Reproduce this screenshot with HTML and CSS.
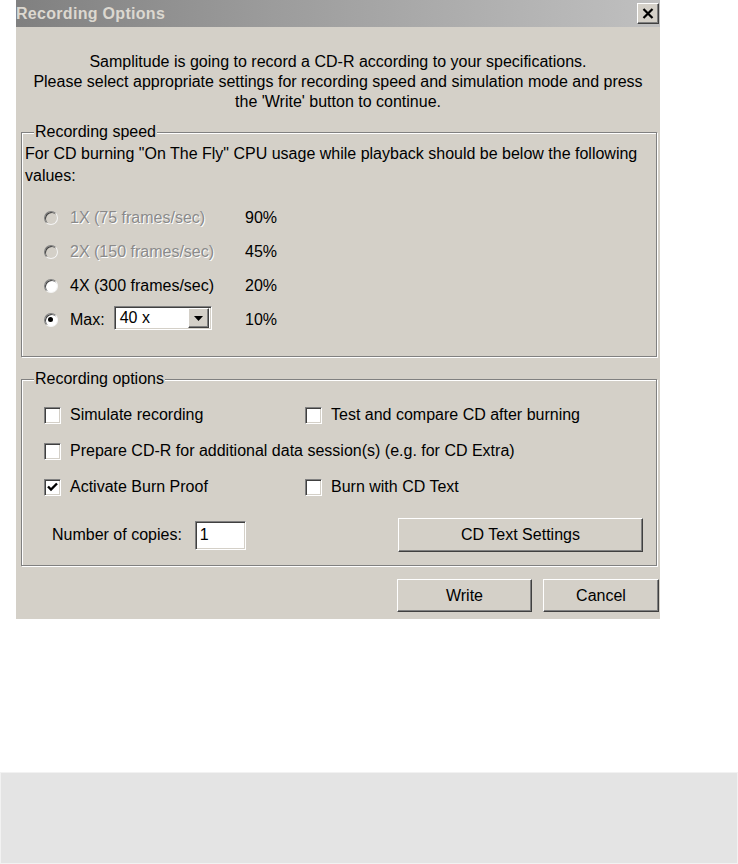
FILE: index.html
```html
<!doctype html>
<html lang="en">
<head>
    <meta charset="UTF-8" />
    <meta name="viewport" content="width=device-width, initial-scale=1.0" />
    <title>Recording Options</title>
    <link rel="stylesheet" href="styles.css">
</head>
<body>
    <div class="dialog">
        <div class="titlebar">
            <span class="title">Recording Options</span>
            <span class="close">
                <svg width="12" height="11" viewBox="0 0 12 11">
                    <path d="M1.5 1 L10.5 10 M10.5 1 L1.5 10" stroke="#000" stroke-width="2.2" fill="none"/>
                </svg>
            </span>
        </div>

        <div class="intro">
            Samplitude is going to record a CD-R according to your specifications.<br>
            Please select appropriate settings for recording speed and simulation mode and press<br>
            the 'Write' button to continue.
        </div>

        <fieldset class="group speed">
            <legend>Recording speed</legend>
            <p class="note">For CD burning "On The Fly" CPU usage while playback should be below the following<br>values:</p>

            <div class="speed-list">
                <div class="speed-row disabled">
                    <span class="radio"></span>
                    <span class="speed-label">1X (75 frames/sec)</span>
                    <span class="pct">90%</span>
                </div>
                <div class="speed-row disabled">
                    <span class="radio"></span>
                    <span class="speed-label">2X (150 frames/sec)</span>
                    <span class="pct">45%</span>
                </div>
                <div class="speed-row">
                    <span class="radio"></span>
                    <span class="speed-label">4X (300 frames/sec)</span>
                    <span class="pct">20%</span>
                </div>
                <div class="speed-row">
                    <span class="radio checked"></span>
                    <span class="speed-label max">
                        Max:
                        <span class="combo">
                            <span class="combo-value">40 x</span>
                            <span class="combo-btn">
                                <svg width="9" height="5" viewBox="0 0 9 5"><path d="M0 0 H9 L4.5 5 Z" fill="#000"/></svg>
                            </span>
                        </span>
                    </span>
                    <span class="pct">10%</span>
                </div>
            </div>
        </fieldset>

        <fieldset class="group options">
            <legend>Recording options</legend>

            <div class="check-grid">
                <label class="check"><span class="box"></span>Simulate recording</label>
                <label class="check"><span class="box"></span>Test and compare CD after burning</label>
                <label class="check wide"><span class="box"></span>Prepare CD-R for additional data session(s) (e.g. for CD Extra)</label>
                <label class="check"><span class="box checked">
                    <svg width="11" height="10" viewBox="0 0 11 10"><path d="M1 4.5 L4 7.5 L10 1.5" stroke="#000" stroke-width="2.4" fill="none"/></svg>
                </span>Activate Burn Proof</label>
                <label class="check"><span class="box"></span>Burn with CD Text</label>
            </div>

            <div class="copies-row">
                <div class="copies">
                    <span>Number of copies:</span>
                    <span class="field">1</span>
                </div>
                <button class="btn btn-cdtext">CD Text Settings</button>
            </div>
        </fieldset>

        <div class="actions">
            <button class="btn btn-write">Write</button>
            <button class="btn btn-cancel">Cancel</button>
        </div>
    </div>

    <div class="footer-bar"></div>
</body>
</html>
```

FILE: styles.css
```css
* {
    margin: 0;
    padding: 0;
    box-sizing: border-box;
}

body {
    font-family: "Liberation Sans", Arial, sans-serif;
    font-size: 16px;
    color: #000;
    background: #fff;
    width: 738px;
    height: 864px;
    overflow: hidden;
}

.dialog {
    margin-left: 16px;
    width: 644px;
    height: 619px;
    background: #d4d0c8;
}

.titlebar {
    height: 27px;
    display: flex;
    align-items: center;
    justify-content: space-between;
    padding: 0 1px 0 0;
    background: linear-gradient(to right, #808080 0%, #9c9c9c 40%, #c0c0c0 100%);
}

.title {
    font-weight: bold;
    font-size: 16px;
    color: #dcd8d0;
    letter-spacing: 0.3px;
}

.close {
    width: 22px;
    height: 21px;
    display: flex;
    align-items: center;
    justify-content: center;
    background: #d4d0c8;
    border: 1px solid;
    border-color: #fff #404040 #404040 #fff;
    box-shadow: inset -1px -1px 0 #808080;
}

.intro {
    text-align: center;
    line-height: 20px;
    padding-top: 25px;
    white-space: nowrap;
}

.group {
    margin: 0 3px 0 5px;
    padding: 0 4px 0 3px;
    border: 1px solid #808080;
    box-shadow: 1px 1px 0 #fff, inset 1px 1px 0 #fff;
}

.group legend {
    margin-left: 9px;
    padding: 0 1px;
    line-height: 18px;
    background: #d4d0c8;
}

.speed {
    margin-top: 11px;
    height: 234px;
}

.note {
    line-height: 22px;
    padding-top: 2px;
    white-space: nowrap;
}

.speed-list {
    margin-top: 14px;
    padding-left: 19px;
}

.speed-row {
    height: 34px;
    display: flex;
    align-items: center;
}

.radio {
    width: 14px;
    height: 14px;
    border-radius: 50%;
    background: #fff;
    border: 1px solid;
    border-color: #808080 #f4f4f4 #f4f4f4 #808080;
    box-shadow: inset 1px 1px 0 #404040;
    position: relative;
    flex-shrink: 0;
}

.radio.checked::after {
    content: "";
    position: absolute;
    left: 3px;
    top: 3px;
    width: 5px;
    height: 5px;
    border-radius: 50%;
    background: #000;
}

.speed-label {
    margin-left: 12px;
    width: 175px;
    display: flex;
    align-items: center;
}

.disabled .radio {
    background: #d4d0c8;
}

.disabled .speed-label {
    color: #8a8a8a;
    text-shadow: 1px 1px 0 #fff;
}

.max {
    gap: 9px;
}

.combo {
    width: 98px;
    height: 24px;
    display: flex;
    align-items: center;
    justify-content: space-between;
    background: #fff;
    border: 1px solid;
    border-color: #808080 #fff #fff #808080;
    box-shadow: inset 1px 1px 0 #404040, inset -1px -1px 0 #d4d0c8;
    padding: 2px 2px 2px 5px;
    margin-top: -4px;
}

.combo-btn {
    width: 21px;
    height: 20px;
    display: flex;
    align-items: center;
    justify-content: center;
    background: #d4d0c8;
    border: 1px solid;
    border-color: #fff #404040 #404040 #fff;
    box-shadow: inset -1px -1px 0 #808080;
}

.options {
    margin-top: 13px;
    height: 196px;
}

.check-grid {
    display: grid;
    grid-template-columns: 261px 1fr;
    grid-auto-rows: 36px;
    padding-top: 9px;
    padding-left: 19px;
}

.check {
    display: flex;
    align-items: center;
    gap: 9px;
    white-space: nowrap;
}

.check.wide {
    grid-column: 1 / 3;
}

.box {
    width: 17px;
    height: 17px;
    display: flex;
    align-items: center;
    justify-content: center;
    background: #fff;
    border: 1px solid;
    border-color: #808080 #fff #fff #808080;
    box-shadow: inset 1px 1px 0 #404040, inset -1px -1px 0 #d4d0c8;
    flex-shrink: 0;
}

.copies-row {
    margin-top: 13px;
    height: 34px;
    display: flex;
    align-items: center;
    justify-content: space-between;
    padding: 0 9px 0 27px;
}

.copies {
    display: flex;
    align-items: center;
    gap: 13px;
}

.field {
    width: 51px;
    height: 29px;
    display: flex;
    align-items: center;
    padding-left: 4px;
    background: #fff;
    border: 1px solid;
    border-color: #808080 #fff #fff #808080;
    box-shadow: inset 1px 1px 0 #404040, inset -1px -1px 0 #d4d0c8;
}

.btn {
    font-family: inherit;
    font-size: 16px;
    color: #000;
    height: 34px;
    background: #d4d0c8;
    border: 1px solid;
    border-color: #fff #404040 #404040 #fff;
    box-shadow: inset -1px -1px 0 #808080;
}

.btn-cdtext {
    width: 245px;
}

.actions {
    margin-top: 13px;
    display: flex;
    justify-content: flex-end;
    gap: 11px;
    padding-right: 1px;
}

.btn-write {
    width: 135px;
    height: 33px;
}

.btn-cancel {
    width: 116px;
    height: 33px;
}

.footer-bar {
    margin-top: 153px;
    height: 92px;
    background: #e4e4e4;
    border: 1px solid #f2f2f2;
}
```
